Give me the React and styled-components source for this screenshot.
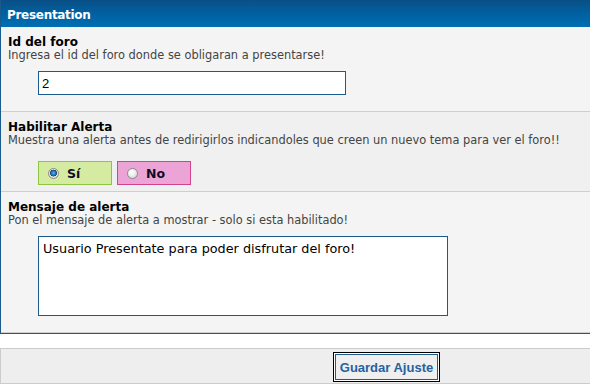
import React from "react";
import styled, { createGlobalStyle } from "styled-components";

const Global = createGlobalStyle`
  html, body { margin: 0; padding: 0; background: #ffffff; }
  body { width: 590px; overflow: hidden; font-family: "DejaVu Sans", Verdana, sans-serif; }
`;

const Panel = styled.div`
  border-left: 1px solid #1a5a8c;
  border-bottom: 1px solid #1a5a8c;
`;

const Header = styled.div`
  box-sizing: border-box;
  height: 27px;
  padding: 8px 0 0 6px;
  background: linear-gradient(to bottom, #0a4f86 0%, #0062a3 55%, #006fb3 100%);
  color: #ffffff;
  font-weight: bold;
  font-size: 12px;
  line-height: 14px;
  letter-spacing: -0.3px;
`;

const Section = styled.div`
  background: ${(p) => (p.$alt ? "#f0f0f0" : "#f4f4f4")};
  padding: 8px 0 ${(p) => p.$pb}px 7px;
  border-top: ${(p) => (p.$first ? "none" : "1px solid #cfcfcf")};
  border-bottom: ${(p) => (p.$last ? "1px solid #cfcfcf" : "none")};
`;

const Title = styled.div`
  font-weight: bold;
  font-size: 12px;
  line-height: 14px;
  color: #000000;
`;

const Desc = styled.div`
  font-size: 11.4px;
  line-height: 13px;
  color: #444444;
  white-space: nowrap;
`;

const Field = styled.div`
  margin: ${(p) => p.$mt}px 0 0 30px;
  display: flex;
  gap: 5px;
`;

const TextInput = styled.input`
  box-sizing: border-box;
  width: 308px;
  height: 24px;
  border: 1px solid #1a5a8c;
  background: #ffffff;
  padding: 0 3px;
  font-family: "Liberation Sans", Arial, sans-serif;
  font-size: 13px;
  color: #000000;
  outline: none;
`;

const TextArea = styled.textarea`
  box-sizing: border-box;
  width: 410px;
  height: 80px;
  border: 1px solid #1a5a8c;
  background: #ffffff;
  padding: 4px 4px;
  font-family: "DejaVu Sans", Verdana, sans-serif;
  font-size: 12.8px;
  line-height: 16px;
  color: #000000;
  resize: none;
  outline: none;
`;

const RadioBox = styled.label`
  box-sizing: border-box;
  width: 74px;
  height: 24px;
  display: flex;
  align-items: center;
  gap: 8px;
  padding-left: 9px;
  background: ${(p) => p.$bg};
  border: 1px solid ${(p) => p.$border};
  font-weight: bold;
  font-size: 12.5px;
  color: #0d0d26;
`;

const RadioDot = styled.span`
  width: 11px;
  height: 11px;
  border-radius: 50%;
  box-sizing: border-box;
  border: 1px solid #8a8a8a;
  background: ${(p) =>
    p.$on
      ? "radial-gradient(circle at 50% 45%, #5fb0e8 0%, #1f6fb0 35%, #16456e 48%, #e8e8e8 55%, #cfcfcf 100%)"
      : "radial-gradient(circle at 40% 35%, #ffffff 0%, #eeeeee 45%, #c8c8c8 100%)"};
`;

const Footer = styled.div`
  margin-top: 14px;
  background: #eeeeee;
  border-top: 1px solid #cccccc;
  border-bottom: 1px solid #cccccc;
  border-left: 1px solid #cccccc;
  padding: 3px 0 1px 332px;
  display: flex;
`;

const Button = styled.button`
  box-sizing: border-box;
  width: 107px;
  height: 30px;
  padding: 0;
  border: 1px solid #000000;
  box-shadow: inset 0 0 0 1px #ffffff, inset 0 0 0 2px #1a5a8c;
  background: #efefef;
  color: #2661a0;
  font-family: "Liberation Sans", Arial, sans-serif;
  font-weight: bold;
  font-size: 13px;
`;

export default function App() {
  return (
    <>
      <Global />
      <Panel>
        <Header>Presentation</Header>
        <Section $first $pb={16}>
          <Title>Id del foro</Title>
          <Desc>Ingresa el id del foro donde se obligaran a presentarse!</Desc>
          <Field $mt={9}>
            <TextInput defaultValue="2" />
          </Field>
        </Section>
        <Section $alt $pb={6}>
          <Title>Habilitar Alerta</Title>
          <Desc>
            Muestra una alerta antes de redirigirlos indicandoles que creen un nuevo tema para ver el foro!!
          </Desc>
          <Field $mt={14}>
            <RadioBox $bg="#d6eba2" $border="#8dc641">
              <RadioDot $on />
              Sí
            </RadioBox>
            <RadioBox $bg="#eca4d6" $border="#d3428e">
              <RadioDot />
              No
            </RadioBox>
          </Field>
        </Section>
        <Section $last $pb={16}>
          <Title>Mensaje de alerta</Title>
          <Desc>Pon el mensaje de alerta a mostrar - solo si esta habilitado!</Desc>
          <Field $mt={9}>
            <TextArea defaultValue="Usuario Presentate para poder disfrutar del foro!" />
          </Field>
        </Section>
      </Panel>
      <Footer>
        <Button>Guardar Ajuste</Button>
      </Footer>
    </>
  );
}
